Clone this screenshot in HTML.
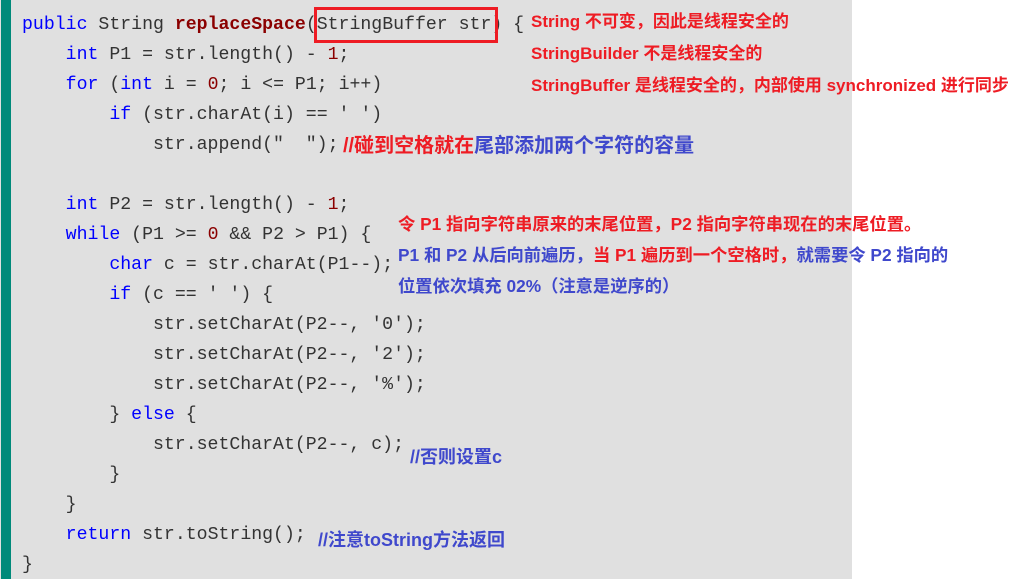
<!DOCTYPE html>
<html><head><meta charset="utf-8"><style>
body{margin:0;width:1031px;height:579px;background:#fff;position:relative;overflow:hidden}
#bg{position:absolute;left:0;top:0;width:852px;height:579px;background:#e0e0e0}
#bar{position:absolute;left:1px;top:0;width:10px;height:579px;background:#008a7a}
.c{position:absolute;left:22px;font-family:"Liberation Mono",monospace;font-size:18.2px;color:#333;white-space:pre;line-height:30px}
.k{color:#0000ff}.f{color:#8b0000;font-weight:bold}.n{color:#8b0000}
.a{position:absolute;font-family:"Liberation Sans","Noto Sans CJK SC",sans-serif;font-size:17px;font-weight:bold;white-space:pre;line-height:20px}
.r{color:#ee1c24}.b{color:#3f48cc}
#box{position:absolute;left:314px;top:7px;width:178px;height:30px;border:3px solid #ee1c24}
</style></head><body>
<div id="bg"></div><div id="bar"></div>
<div class="c" style="top:10px"><span class="k">public</span> String <span class="f">replaceSpace</span>(StringBuffer str) {</div>
<div class="c" style="top:40px">    <span class="k">int</span> P1 = str.length() - <span class="n">1</span>;</div>
<div class="c" style="top:70px">    <span class="k">for</span> (<span class="k">int</span> i = <span class="n">0</span>; i &lt;= P1; i++)</div>
<div class="c" style="top:100px">        <span class="k">if</span> (str.charAt(i) == ' ')</div>
<div class="c" style="top:130px">            str.append("  ");</div>
<div class="c" style="top:190px">    <span class="k">int</span> P2 = str.length() - <span class="n">1</span>;</div>
<div class="c" style="top:220px">    <span class="k">while</span> (P1 &gt;= <span class="n">0</span> &amp;&amp; P2 &gt; P1) {</div>
<div class="c" style="top:250px">        <span class="k">char</span> c = str.charAt(P1--);</div>
<div class="c" style="top:280px">        <span class="k">if</span> (c == ' ') {</div>
<div class="c" style="top:310px">            str.setCharAt(P2--, '0');</div>
<div class="c" style="top:340px">            str.setCharAt(P2--, '2');</div>
<div class="c" style="top:370px">            str.setCharAt(P2--, '%');</div>
<div class="c" style="top:400px">        } <span class="k">else</span> {</div>
<div class="c" style="top:430px">            str.setCharAt(P2--, c);</div>
<div class="c" style="top:460px">        }</div>
<div class="c" style="top:490px">    }</div>
<div class="c" style="top:520px">    <span class="k">return</span> str.toString();</div>
<div class="c" style="top:550px">}</div>
<div id="box"></div>
<div class="a r" style="left:531px;top:12px">String 不可变，因此是线程安全的</div>
<div class="a r" style="left:531px;top:44px">StringBuilder 不是线程安全的</div>
<div class="a r" style="left:531px;top:76px">StringBuffer 是线程安全的，内部使用 synchronized 进行同步</div>
<div class="a" style="left:343px;top:135px;font-size:20px;line-height:22px"><span class="r">//碰到空格就在</span><span class="b">尾部添加两个字符的容量</span></div>
<div class="a r" style="left:398px;top:214px;font-size:17.3px">令 P1 指向字符串原来的末尾位置，P2 指向字符串现在的末尾位置。</div>
<div class="a" style="left:398px;top:245px;font-size:17.3px"><span class="b">P1 和 P2 从后向前遍历，</span><span class="r">当 P1 遍历到一个空格时，</span><span class="b">就需要令 P2 指向的</span></div>
<div class="a b" style="left:398px;top:276px;font-size:17.3px">位置依次填充 02%（注意是逆序的）</div>
<div class="a b" style="left:410px;top:447px;font-size:18px">//否则设置c</div>
<div class="a b" style="left:318px;top:530px;font-size:18px">//注意toString方法返回</div>
</body></html>
